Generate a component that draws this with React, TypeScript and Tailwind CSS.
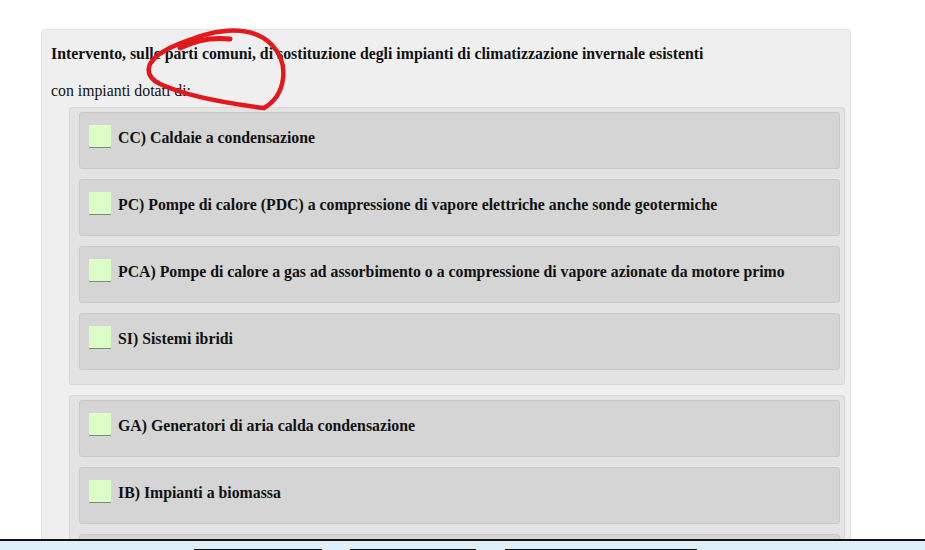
import React from 'react';

const serif = { fontFamily: '"Liberation Serif", "Times New Roman", serif' };

const groups: string[][] = [
  [
    'CC) Caldaie a condensazione',
    'PC) Pompe di calore (PDC) a compressione di vapore elettriche anche sonde geotermiche',
    'PCA) Pompe di calore a gas ad assorbimento o a compressione di vapore azionate da motore primo',
    'SI) Sistemi ibridi',
  ],
  [
    'GA) Generatori di aria calda condensazione',
    'IB) Impianti a biomassa',
    '',
  ],
];

const Option = ({ label }: { label: string }) => (
  <div className="mb-[10px] flex h-[57px] items-start rounded-[3px] border border-[#c9c9c9] bg-[#d5d5d5] pl-[9px]">
    <div className="mt-[12px] h-[23px] w-[22px] shrink-0 border-b border-[#7f8a74] bg-[#ddfdc8]" />
    {label && (
      <span className="ml-[7px] mt-[16px] text-[15.8px] leading-[18px] font-bold text-[#111]">{label}</span>
    )}
  </div>
);

export default function App() {
  return (
    <div className="relative min-h-screen bg-white text-black" style={serif}>
      <div className="pt-[29px] pl-[41px]">
        <div className="w-[810px] rounded-[4px] border border-[#e2e2e2] bg-[#efefef] pt-[15px] pb-[40px]">
          <div className="pl-[9px] text-[15.8px] leading-[18px] font-bold text-[#111]">
            Intervento, sulle parti comuni, di sostituzione degli impianti di climatizzazione invernale esistenti
          </div>
          <div className="mt-[19px] mb-[7px] pl-[9px] text-[15.8px] leading-[18px] text-[#111]">
            con impianti dotati di:
          </div>
          {groups.map((g, i) => (
            <div
              key={i}
              className="ml-[27px] mr-[5px] mb-[10px] rounded-[3px] border border-[#d6d6d6] bg-[#e3e3e3] pt-[4px] pr-[4px] pb-[4px] pl-[9px]"
            >
              {g.map((label, j) => (
                <Option key={j} label={label} />
              ))}
            </div>
          ))}
        </div>
      </div>

      {/* hand-drawn annotation */}
      <svg className="pointer-events-none absolute left-0 top-0" width="925" height="550">
        <path
          d="M230 39 C212 37 194 41 180 48"
          fill="none"
          stroke="#e3171c"
          strokeWidth="5"
          strokeLinecap="round"
        />
        <path
          d="M184 45 C205 30 250 22 272 45 C290 64 286 95 264 108 C232 104 186 96 160 84 C144 76 144 62 166 50 C176 44 190 40 200 36"
          fill="none"
          stroke="#e3171c"
          strokeWidth="4.5"
          strokeLinecap="round"
          strokeLinejoin="round"
        />
      </svg>

      {/* bottom toolbar */}
      <div className="fixed left-0 right-0 top-[539px] h-[60px] border-t-2 border-[#111] bg-[#def0fa]">
        <div className="flex pl-[194px] pt-[8px]">
          <div className="h-[30px] w-[128px] border-t border-[#111] bg-white" />
          <div className="ml-[28px] h-[30px] w-[126px] border-t border-[#111] bg-white" />
          <div className="ml-[29px] h-[30px] w-[192px] border-t border-[#111] bg-white" />
        </div>
      </div>
    </div>
  );
}
